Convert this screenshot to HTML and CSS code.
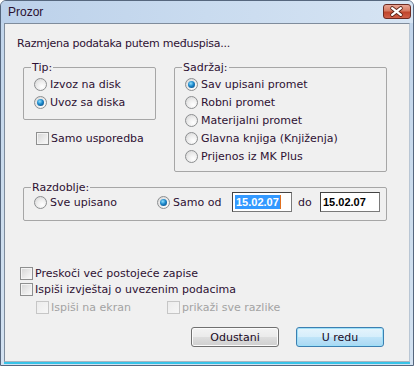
FILE: index.html
```html
<!DOCTYPE html>
<html lang="hr">
<head>
  <meta charset="UTF-8">
  <title>Prozor</title>
  <link rel="stylesheet" href="styles.css">
</head>
<body>
  <div class="window">
    <div class="titlebar">
      <span class="title">Prozor</span>
      <span class="close">
        <svg width="28" height="15" viewBox="0 0 28 15">
          <path d="M9.5 4 L18.5 11 M18.5 4 L9.5 11" stroke="#5a2418" stroke-width="4" stroke-linecap="round" fill="none"/>
          <path d="M9.5 4 L18.5 11 M18.5 4 L9.5 11" stroke="#ffffff" stroke-width="2.4" stroke-linecap="round" fill="none"/>
        </svg>
      </span>
    </div>

    <div class="client">
      <p class="intro">Razmjena podataka putem međuspisa...</p>

      <div class="top-row">
        <div class="left-col">
          <fieldset class="group group-tip">
            <legend>Tip:</legend>
            <label class="opt"><span class="radio"></span>Izvoz na disk</label>
            <label class="opt"><span class="radio checked"></span>Uvoz sa diska</label>
          </fieldset>
          <label class="opt compare"><span class="check"></span>Samo usporedba</label>
        </div>

        <fieldset class="group group-content">
          <legend>Sadržaj:</legend>
          <label class="opt"><span class="radio checked"></span>Sav upisani promet</label>
          <label class="opt"><span class="radio"></span>Robni promet</label>
          <label class="opt"><span class="radio"></span>Materijalni promet</label>
          <label class="opt"><span class="radio"></span>Glavna knjiga (Knjiženja)</label>
          <label class="opt"><span class="radio"></span>Prijenos iz MK Plus</label>
        </fieldset>
      </div>

      <fieldset class="group group-period">
        <legend>Razdoblje:</legend>
        <div class="period-row">
          <label class="opt all"><span class="radio"></span>Sve upisano</label>
          <label class="opt from"><span class="radio checked"></span>Samo od</label>
          <div class="field"><span class="sel">15.02.07</span><span class="caret"></span></div>
          <span class="to">do</span>
          <div class="field"><span>15.02.07</span></div>
        </div>
      </fieldset>

      <div class="options">
        <label class="opt small"><span class="check"></span>Preskoči već postojeće zapise</label>
        <label class="opt small"><span class="check"></span>Ispiši izvještaj o uvezenim podacima</label>
        <div class="sub-row">
          <label class="opt small disabled screen"><span class="check"></span>Ispiši na ekran</label>
          <label class="opt small disabled"><span class="check"></span>prikaži sve razlike</label>
        </div>
      </div>

      <div class="buttons">
        <button class="btn">Odustani</button>
        <button class="btn default">U redu</button>
      </div>
    </div>
  </div>
</body>
</html>
```

FILE: styles.css
```css
:root {
  --text-color: #2e1033;
  --disabled-color: #a3a3a3;
  --face-color: #f0f0f0;
  --group-border: #a6a6a6;
}

* {
  box-sizing: border-box;
}

body {
  margin: 0;
  background: #ffffff;
  font-family: "DejaVu Sans", sans-serif;
  font-size: 11px;
  color: var(--text-color);
}

.window {
  width: 414px;
  height: 366px;
  border: 1px solid #56677e;
  border-radius: 6px 6px 0 0;
  background: linear-gradient(to bottom, #c0d4eb, #cddded 60%, #d3e2f2);
  display: flex;
  flex-direction: column;
}

.titlebar {
  height: 22px;
  display: flex;
  align-items: center;
  justify-content: space-between;
  padding: 0 2px 1px 7px;
  background: linear-gradient(to right, #bcd1ea, #c9dbef 50%, #d6e4f3);
  border-radius: 5px 5px 0 0;
}

.title {
  font-family: "Liberation Sans", Arial, sans-serif;
  font-size: 12px;
  color: #2a1030;
}

.close {
  width: 28px;
  height: 15px;
  border: 1px solid #6d2b22;
  border-radius: 3px;
  background: linear-gradient(to bottom, #e9a594, #d57a62 45%, #c0452b 55%, #d0604a);
  display: flex;
  overflow: hidden;
}

.close svg {
  margin: -1px 0 0 -1px;
}

.client {
  flex: 1;
  margin: 0 3px 3px 3px;
  background: var(--face-color);
  border: 1px solid #7f8c9c;
  border-right-color: #b9c6d4;
  border-bottom-color: #a9b4c0;
  box-shadow: 0 2px 0 #38c3e8;
  padding: 13px 0 0 0;
  display: flex;
  flex-direction: column;
}

.intro {
  margin: 0 0 0 12px;
  line-height: 13px;
  letter-spacing: -0.25px;
}

.top-row {
  display: flex;
  gap: 18px;
  margin: 11px 0 0 18px;
}

.left-col {
  display: flex;
  flex-direction: column;
}

.group {
  margin: 0;
  padding: 1px 0 0 10px;
  border: 1px solid var(--group-border);
  border-radius: 2px;
  min-inline-size: 0;
}

.group legend {
  padding: 0 1px;
  margin-left: -3px;
  line-height: 13px;
}

.group-tip {
  width: 133px;
  height: 59px;
}

.group-content {
  width: 213px;
  height: 111px;
}

.opt {
  display: flex;
  align-items: center;
  gap: 3px;
  height: 18px;
  white-space: nowrap;
}

.compare {
  margin: 9px 0 0 13px;
  gap: 2px;
}

.radio {
  position: relative;
  flex: none;
  width: 13px;
  height: 13px;
  border-radius: 50%;
  border: 1px solid #8c8e90;
  background: radial-gradient(circle at 65% 70%, #ffffff 0, #eeeeee 45%, #d2d2d2 100%);
}

.radio.checked::after {
  content: "";
  position: absolute;
  left: 2px;
  top: 2px;
  width: 7px;
  height: 7px;
  border-radius: 50%;
  background: radial-gradient(circle at 40% 35%, #8fe0ff 0, #1a86c9 45%, #0b3f73 100%);
}

.check {
  flex: none;
  width: 13px;
  height: 13px;
  border: 1px solid #8e8f8f;
  background: linear-gradient(135deg, #d4d4d4, #e8e8e8 50%, #fbfbfb);
  box-shadow: inset 0 0 0 1px #f4f4f4;
}

.group-period {
  width: 364px;
  height: 40px;
  margin: 9px 0 0 18px;
  padding-top: 0;
}

.period-row {
  display: flex;
  align-items: center;
  height: 20px;
  margin-top: -2px;
}

.period-row .all {
  width: 123px;
}

.period-row .from {
  width: 75px;
}

.field {
  width: 60px;
  height: 20px;
  border: 1px solid #7a7a7a;
  border-top-color: #434343;
  border-left-color: #434343;
  background: #ffffff;
  display: flex;
  align-items: center;
  padding-left: 2px;
  font-family: "Liberation Sans", Arial, sans-serif;
  font-size: 11px;
  font-weight: bold;
  color: #000000;
}

.sel {
  background: #3399ff;
  color: #ffffff;
  line-height: 14px;
  padding: 0 1px;
}

.caret {
  width: 1px;
  height: 14px;
  background: #e07020;
}

.to {
  width: 22px;
  margin-left: 6px;
}

.options {
  margin: 44px 0 0 15px;
  display: flex;
  flex-direction: column;
}

.opt.small {
  height: 16px;
  gap: 2px;
}

.sub-row {
  display: flex;
  margin: 2px 0 0 16px;
}

.sub-row .screen {
  width: 131px;
}

.disabled {
  color: var(--disabled-color);
}

.disabled .check {
  border-color: #c6c6c6;
  background: linear-gradient(135deg, #ececec, #f6f6f6);
  box-shadow: none;
}

.buttons {
  display: flex;
  justify-content: flex-end;
  gap: 17px;
  margin: 12px 25px 0 0;
}

.btn {
  width: 88px;
  height: 20px;
  padding: 0;
  font-family: inherit;
  font-size: 11px;
  color: #1a0a1e;
  border: 1px solid #707070;
  border-radius: 3px;
  background: linear-gradient(to bottom, #f3f3f3, #ebebeb 48%, #dddddd 52%, #cfcfcf);
  box-shadow: inset 0 0 0 1px #fbfbfb;
}

.btn.default {
  border-color: #3c7fb1;
  background: linear-gradient(to bottom, #e5f4fc, #d6eefb 48%, #bfe4f8 52%, #a9d8f3);
  box-shadow: inset 0 0 0 1px #9ee0f8;
}
```
